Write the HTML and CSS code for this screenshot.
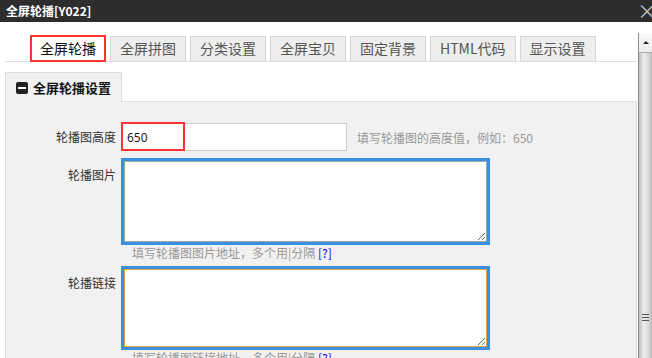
FILE: index.html
```html
<!DOCTYPE html>
<html>
<head>
  <title>全屏轮播[Y022]</title>
  <link rel="stylesheet" href="styles.css">
</head>

<body>
  <div class="titlebar">
    <span class="title">全屏轮播[Y022]</span>
    <span class="close">×</span>
  </div>

  <div class="main">
    <div class="content">
      <div class="tabs">
        <div class="tab tab-active">全屏轮播</div>
        <div class="tab">全屏拼图</div>
        <div class="tab">分类设置</div>
        <div class="tab">全屏宝贝</div>
        <div class="tab">固定背景</div>
        <div class="tab">HTML代码</div>
        <div class="tab">显示设置</div>
      </div>

      <div class="panel">
        <div class="panel-head"><span class="icon-minus"></span>全屏轮播设置</div>
        <div class="panel-body">
          <div class="row">
            <label class="label">轮播图高度</label>
            <div class="field field-inline">
              <span class="mark-wrap">
                <input class="text-input" value="650">
                <span class="mark"></span>
              </span>
              <span class="hint">填写轮播图的高度值，例如：650</span>
            </div>
          </div>

          <div class="row">
            <label class="label label-top">轮播图片</label>
            <div class="field">
              <textarea class="text-area"></textarea>
              <div class="hint-block">填写轮播图图片地址，多个用|分隔 <a class="help">[?]</a></div>
            </div>
          </div>

          <div class="row">
            <label class="label label-top">轮播链接</label>
            <div class="field">
              <textarea class="text-area text-area-focus"></textarea>
              <div class="hint-block">填写轮播图链接地址，多个用|分隔 <a class="help">[?]</a></div>
            </div>
          </div>
        </div>
      </div>
    </div>

    <div class="scrollbar">
      <div class="sb-up"><span class="sb-arrow"></span></div>
      <div class="sb-thumb"><span class="sb-grip"></span></div>
    </div>
  </div>
</body>
</html>
```

FILE: styles.css
```css
body {
  margin: 0;
  padding: 0;
  width: 652px;
  height: 358px;
  overflow: hidden;
  background-color: #fff;
  font-family: 'Noto Sans CJK SC', 'Noto Sans', sans-serif;
}

.titlebar {
  height: 22px;
  background-color: #2d2d2d;
  display: flex;
  justify-content: space-between;
  align-items: center;
  padding-left: 6px;
}

.title {
  color: #fff;
  font-size: 12px;
  font-weight: bold;
  line-height: 22px;
}

.close {
  color: #bbb;
  font-size: 20px;
  line-height: 22px;
  margin-right: -5px;
}

.main {
  display: flex;
  height: 336px;
}

.content {
  width: 633px;
  padding: 0 1px 0 5px;
}

.tabs {
  display: flex;
  align-items: flex-end;
  gap: 4px;
  height: 39px;
  padding-left: 25px;
  border-bottom: 1px solid #ddd;
}

.tab {
  box-sizing: border-box;
  height: 25px;
  padding: 0 9px;
  border: 1px solid #d6d6d6;
  border-bottom: none;
  background-color: #eee;
  color: #555;
  font-size: 14px;
  line-height: 23px;
}

.tab-active {
  height: 27px;
  margin-bottom: -1px;
  padding: 0 8px;
  border: 2px solid #f33;
  background-color: #fff;
  color: #111;
}

.panel {
  margin-top: 10px;
}

.panel-head {
  position: relative;
  z-index: 1;
  box-sizing: border-box;
  width: 117px;
  height: 30px;
  margin-bottom: -1px;
  padding-left: 10px;
  display: flex;
  align-items: center;
  gap: 5px;
  background-color: #f1f1f1;
  border: 1px solid #ddd;
  border-bottom: none;
  color: #111;
  font-size: 13px;
  font-weight: bold;
}

.icon-minus {
  width: 12px;
  height: 12px;
  border-radius: 2px;
  background-color: #222;
  display: flex;
  align-items: center;
  justify-content: center;
}

.icon-minus::after {
  content: '';
  width: 8px;
  height: 2px;
  background-color: #fff;
}

.panel-body {
  height: 400px;
  padding-top: 21px;
  background-color: #f1f1f1;
  border: 1px solid #ddd;
}

.row {
  display: flex;
  margin-bottom: 7px;
}

.label {
  width: 110px;
  flex-shrink: 0;
  text-align: right;
  font-size: 12px;
  line-height: 28px;
  color: #333;
}

.label-top {
  padding-top: 3px;
}

.field {
  margin-left: 5px;
}

.field-inline {
  display: flex;
  align-items: center;
}

.mark-wrap {
  position: relative;
  display: block;
}

.text-input {
  display: block;
  box-sizing: border-box;
  width: 226px;
  height: 28px;
  margin: 0;
  padding: 0 5px;
  border: 1px solid #ccc;
  background-color: #fff;
  font-family: 'Noto Sans', sans-serif;
  font-size: 12px;
  color: #222;
  outline: none;
}

.mark {
  position: absolute;
  left: 0;
  top: -1px;
  box-sizing: border-box;
  width: 64px;
  height: 29px;
  border: 2px solid #f33;
}

.hint {
  margin-left: 10px;
  font-size: 12px;
  color: #999;
}

.text-area {
  display: block;
  box-sizing: border-box;
  width: 363px;
  height: 81px;
  margin: 3px;
  padding: 2px;
  border: 1px solid #a5a5a5;
  outline: 3px solid #3990e2;
  background-color: #fff;
}

.text-area-focus {
  height: 78px;
  border-color: #e8a33d;
}

.hint-block {
  padding-left: 11px;
  margin-bottom: -2px;
  font-size: 12px;
  line-height: 16px;
  color: #999;
}

.help {
  color: #0000ee;
}

.scrollbar {
  width: 13px;
  margin-top: 11px;
  display: flex;
  flex-direction: column;
  border-left: 1px solid #8c8c8c;
}

.sb-up {
  height: 19px;
  background: linear-gradient(#fafafa, #ececec);
  display: flex;
  justify-content: center;
  align-items: center;
}

.sb-arrow {
  width: 0;
  height: 0;
  border-left: 3px solid transparent;
  border-right: 3px solid transparent;
  border-bottom: 3px solid #222;
}

.sb-thumb {
  flex: 1;
  background: linear-gradient(to right, #bdbdbd, #ececec 35%, #dcdcdc 70%, #b8b8b8);
  border-top: 1px solid #aaa;
  display: flex;
  justify-content: center;
}

.sb-grip {
  width: 7px;
  height: 8px;
  margin-top: 261px;
  background: repeating-linear-gradient(#555 0 1px, transparent 1px 3px);
}
```
